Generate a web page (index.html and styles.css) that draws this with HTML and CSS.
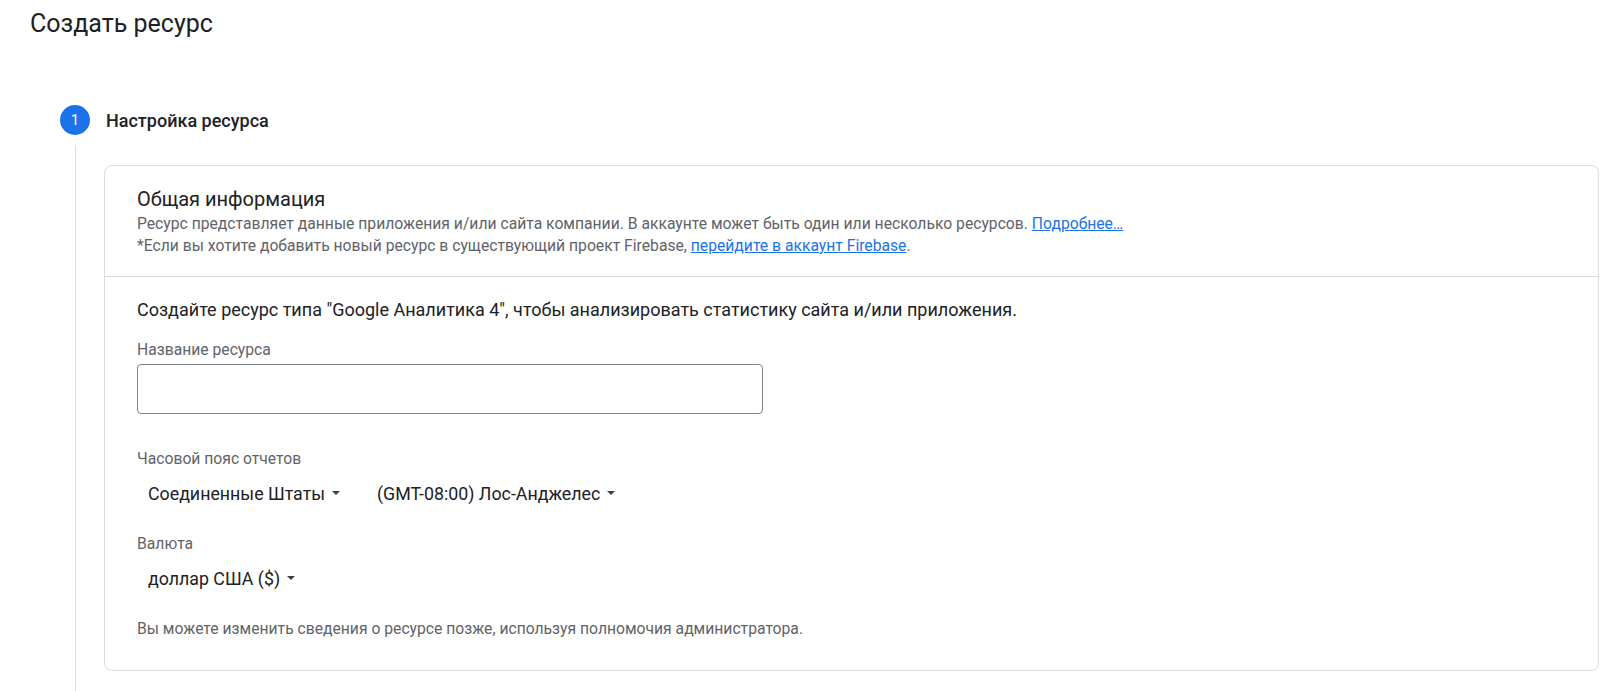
FILE: index.html
```html
<!DOCTYPE html>
<html lang="ru">
<head>
<meta charset="utf-8">
<title>Создать ресурс</title>
<link rel="stylesheet" href="styles.css">
</head>
<body>
<div class="page">
  <h1 class="page-title">Создать ресурс</h1>
  <div class="stepper">
    <div class="step-head">
      <div class="step-num">1</div>
      <div class="step-title">Настройка ресурса</div>
    </div>
    <div class="step-body">
      <div class="card">
        <div class="card-head">
          <div class="card-title">Общая информация</div>
          <div class="card-desc">Ресурс представляет данные приложения и/или сайта компании. В аккаунте может быть один или несколько ресурсов. <a href="#">Подробнее…</a></div>
          <div class="card-desc">*Если вы хотите добавить новый ресурс в существующий проект Firebase, <a href="#">перейдите в аккаунт Firebase</a>.</div>
        </div>
        <div class="card-body">
          <div class="intro">Создайте ресурс типа "Google Аналитика 4", чтобы анализировать статистику сайта и/или приложения.</div>
          <div class="field-label">Название ресурса</div>
          <div class="text-input"></div>
          <div class="field-label label-tz">Часовой пояс отчетов</div>
          <div class="select-row">
            <div class="select">Соединенные Штаты<span class="caret"></span></div>
            <div class="select">(GMT-08:00) Лос-Анджелес<span class="caret"></span></div>
          </div>
          <div class="field-label label-cur">Валюта</div>
          <div class="select-row">
            <div class="select">доллар США ($)<span class="caret"></span></div>
          </div>
          <div class="note">Вы можете изменить сведения о ресурсе позже, используя полномочия администратора.</div>
        </div>
      </div>
    </div>
  </div>
</div>
</body>
</html>
```
FILE: styles.css
```css
* { box-sizing: border-box; }
html, body { margin: 0; padding: 0; background: #ffffff; }
body {
  font-family: Roboto, "Liberation Sans", Arial, sans-serif;
  color: #202124;
  overflow: hidden;
}
.page {
  padding: 0 20px 0 30px;
}
.page-title {
  margin: 0;
  padding-top: 8px;
  font-size: 25px;
  line-height: 32px;
  font-weight: 400;
  color: #202124;
}
.stepper {
  margin-top: 64px;
  margin-left: 30px;
}
.step-head {
  display: flex;
  align-items: center;
  gap: 16px;
  height: 32px;
}
.step-num {
  width: 30px;
  height: 30px;
  border-radius: 50%;
  background: #1a73e8;
  color: #ffffff;
  font-size: 15px;
  display: flex;
  align-items: center;
  justify-content: center;
}
.step-title {
  font-size: 18px;
  font-weight: 500;
  color: #202124;
}
.step-body {
  margin-left: 15px;
  margin-top: 9px;
  padding-top: 20px;
  padding-left: 28px;
  border-left: 1px solid #dadce0;
  padding-bottom: 40px;
}
.card {
  border: 1px solid #dadce0;
  border-radius: 8px;
  background: #ffffff;
}
.card-head {
  padding: 19px 32px 19px;
  border-bottom: 1px solid #dadce0;
}
.card-title {
  font-size: 20px;
  line-height: 28px;
  color: #202124;
}
.card-desc {
  font-size: 15.7px;
  line-height: 22px;
  color: #5f6368;
}
.card-desc a { color: #1a73e8; text-decoration: underline; }
.card-body {
  padding: 20px 32px 30px;
}
.intro {
  font-size: 18px;
  line-height: 26px;
  color: #202124;
}
.field-label {
  font-size: 15.7px;
  line-height: 22px;
  color: #5f6368;
  margin-top: 16px;
}
.text-input {
  margin-top: 3px;
  width: 626px;
  height: 50px;
  border: 1px solid #80868b;
  border-radius: 4px;
}
.label-tz { margin-top: 34px; }
.label-cur { margin-top: 25px; }
.select-row {
  display: flex;
  gap: 37px;
  padding-left: 11px;
  margin-top: 8px;
  height: 30px;
  align-items: center;
}
.select {
  font-size: 17.8px;
  color: #202124;
  display: flex;
  align-items: center;
}
.caret {
  display: inline-block;
  width: 0; height: 0;
  margin-left: 7px;
  border-left: 4px solid transparent;
  border-right: 4px solid transparent;
  border-top: 4.5px solid #3c4043;
}
.note {
  margin-top: 25px;
  font-size: 15.7px;
  line-height: 22px;
  color: #5f6368;
}
```
